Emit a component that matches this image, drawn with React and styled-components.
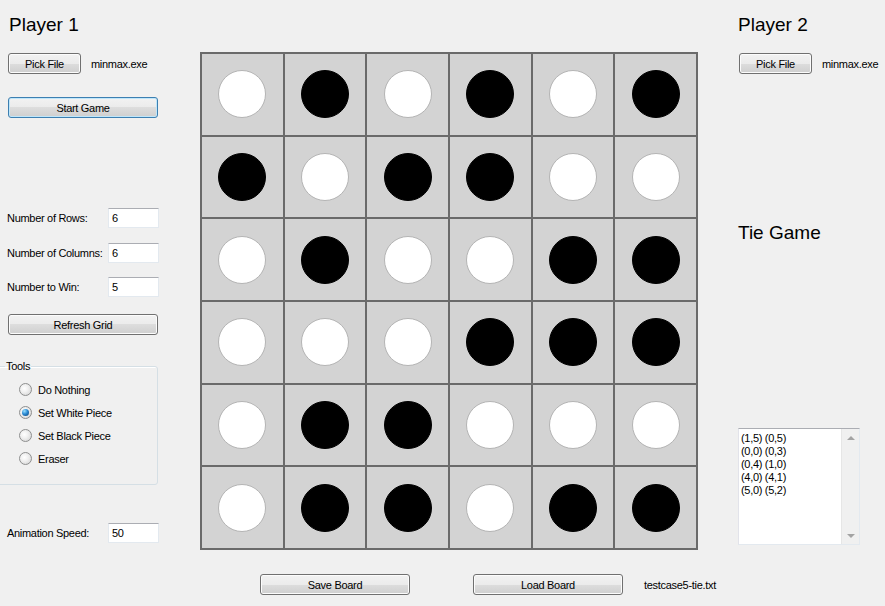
import React from "react";
import styled, { createGlobalStyle } from "styled-components";

const GlobalStyle = createGlobalStyle`
  html, body {
    margin: 0;
    padding: 0;
    background: #f0f0f0;
  }
  body {
    font-family: "Liberation Sans", Arial, sans-serif;
    font-size: 11px;
    letter-spacing: -0.3px;
    color: #000;
  }
`;

// board contents, W = white, B = black
const BOARD = [
  "WBWBWB",
  "BWBBWW",
  "WBWWBB",
  "WWWBBB",
  "WBBWWW",
  "WBBWBB",
];

const MOVES = ["(1,5) (0,5)", "(0,0) (0,3)", "(0,4) (1,0)", "(4,0) (4,1)", "(5,0) (5,2)"];

const Window = styled.div`
  width: 885px;
  height: 606px;
  display: flex;
  overflow: hidden;
  background: #f0f0f0;
`;

const SidePanel = styled.div`
  width: ${(p) => p.$width}px;
  flex-shrink: 0;
  display: flex;
  flex-direction: column;
  padding-left: ${(p) => p.$pad || 0}px;
  box-sizing: border-box;
`;

const CenterColumn = styled.div`
  width: 498px;
  flex-shrink: 0;
  display: flex;
  flex-direction: column;
  padding-top: 52px;
  margin-right: 40px;
`;

const Title = styled.div`
  font-size: 19px;
  line-height: 22px;
  letter-spacing: 0;
  margin-top: 14px;
  margin-left: ${(p) => p.$indent || 0}px;
  white-space: nowrap;
`;

const Result = styled(Title)`
  margin-top: 148px;
`;

const Row = styled.div`
  display: flex;
  align-items: center;
  margin-top: ${(p) => p.$top || 0}px;
  margin-left: ${(p) => p.$indent || 0}px;
`;

const Button = styled.button`
  width: ${(p) => p.$width || 150}px;
  height: 21px;
  flex-shrink: 0;
  padding: 0;
  font-family: "Liberation Sans", Arial, sans-serif;
  font-size: 11px;
  letter-spacing: -0.3px;
  color: #000;
  border: 1px solid ${(p) => (p.$focused ? "#3c7fb1" : "#707070")};
  border-radius: 3px;
  background: linear-gradient(#f2f2f2 0%, #ebebeb 50%, #dddddd 50%, #cfcfcf 100%);
  box-shadow: inset 0 0 0 1px ${(p) => (p.$focused ? "#bfe6fa" : "#fcfcfc")};
  cursor: pointer;
`;

const FileName = styled.span`
  margin-left: 10px;
  white-space: nowrap;
`;

const FieldLabel = styled.span`
  width: 101px;
  white-space: nowrap;
`;

const TextBox = styled.div`
  width: 51px;
  height: 20px;
  box-sizing: border-box;
  background: #fff;
  border: 1px solid #e3e9ef;
  border-top-color: #abadb3;
  display: flex;
  align-items: center;
  padding-left: 3px;
`;

const GroupBox = styled.fieldset`
  margin: 25px 0 0 -10px;
  width: 161px;
  box-sizing: border-box;
  padding: 5px 0 14px 0;
  border: 1px solid #d5dfe5;
  border-radius: 3px;
  box-shadow: inset 1px 1px 0 #fff;
`;

const Legend = styled.legend`
  padding: 0 1px;
  margin-left: 7px;
  line-height: 13px;
`;

const RadioList = styled.div`
  padding-left: 21px;
`;

const RadioRow = styled.label`
  display: flex;
  align-items: center;
  height: 23px;
  gap: 6px;
`;

const RadioDot = styled.span`
  width: 13px;
  height: 13px;
  box-sizing: border-box;
  border-radius: 50%;
  border: 1px solid #8e8f8f;
  background: radial-gradient(circle at 40% 40%, #ffffff 0%, #f0f0f0 40%, #cfcfcf 100%);
  display: flex;
  align-items: center;
  justify-content: center;

  &::after {
    content: "";
    display: ${(p) => (p.$checked ? "block" : "none")};
    width: 7px;
    height: 7px;
    border-radius: 50%;
    background: radial-gradient(circle at 35% 30%, #9be1ff 0%, #2a8ad4 45%, #0d3d6e 100%);
  }
`;

const Board = styled.div`
  width: 498px;
  height: 498px;
  box-sizing: border-box;
  padding: 2px;
  display: grid;
  grid-template-columns: repeat(6, 1fr);
  grid-template-rows: repeat(6, 1fr);
  gap: 2px;
  background: #6a6a6a;
`;

const Cell = styled.div`
  background: #d3d3d3;
  display: flex;
  align-items: center;
  justify-content: center;
`;

const Piece = styled.div`
  width: 48px;
  height: 48px;
  box-sizing: border-box;
  border-radius: 50%;
  background: ${(p) => (p.$black ? "#000" : "#fff")};
  border: 1px solid ${(p) => (p.$black ? "#000" : "#b4b4b4")};
`;

const BottomBar = styled.div`
  display: flex;
  align-items: center;
  margin-top: 24px;
  padding-left: 60px;
  gap: 63px;
  white-space: nowrap;
`;

const LoadGroup = styled.div`
  display: flex;
  align-items: center;
  gap: 21px;
`;

const ListBox = styled.div`
  margin-top: 184px;
  width: 122px;
  height: 117px;
  box-sizing: border-box;
  border: 1px solid #a0a0a0;
  border-color: #abadb3 #e3e9ef #e3e9ef #e2e3ea;
  background: #fff;
  display: flex;
`;

const ListItems = styled.div`
  flex: 1;
  padding: 3px 0 0 2px;
  line-height: 13px;
`;

const ScrollBar = styled.div`
  width: 17px;
  background: #f0f0f0;
  border-left: 1px solid #e6e6e6;
  display: flex;
  flex-direction: column;
  justify-content: space-between;
  align-items: center;
  padding: 7px 0 6px;
`;

const Arrow = styled.span`
  width: 0;
  height: 0;
  border-left: 4px solid transparent;
  border-right: 4px solid transparent;
  ${(p) => (p.$down ? "border-top: 4px solid #a3a3a3;" : "border-bottom: 4px solid #a3a3a3;")}
`;

function Radio({ label, checked }) {
  return (
    <RadioRow>
      <RadioDot $checked={checked} />
      {label}
    </RadioRow>
  );
}

function Field({ label, value, top }) {
  return (
    <Row $top={top}>
      <FieldLabel>{label}</FieldLabel>
      <TextBox>{value}</TextBox>
    </Row>
  );
}

export default function App() {
  return (
    <>
      <GlobalStyle />
      <Window>
        <SidePanel $width={200} $pad={7}>
          <Title $indent={2}>Player 1</Title>
          <Row $top={17} $indent={1}>
            <Button $width={73}>Pick File</Button>
            <FileName>minmax.exe</FileName>
          </Row>
          <Row $top={23} $indent={1}>
            <Button $focused>Start Game</Button>
          </Row>
          <Field label="Number of Rows:" value="6" top={90} />
          <Field label="Number of Columns:" value="6" top={15} />
          <Field label="Number to Win:" value="5" top={14} />
          <Row $top={17} $indent={1}>
            <Button>Refresh Grid</Button>
          </Row>
          <GroupBox>
            <Legend>Tools</Legend>
            <RadioList>
              <Radio label="Do Nothing" />
              <Radio label="Set White Piece" checked />
              <Radio label="Set Black Piece" />
              <Radio label="Eraser" />
            </RadioList>
          </GroupBox>
          <Field label="Animation Speed:" value="50" top={38} />
        </SidePanel>

        <CenterColumn>
          <Board>
            {BOARD.map((row, r) =>
              row.split("").map((c, i) => (
                <Cell key={r + "-" + i}>
                  <Piece $black={c === "B"} />
                </Cell>
              ))
            )}
          </Board>
          <BottomBar>
            <Button>Save Board</Button>
            <LoadGroup>
              <Button>Load Board</Button>
              <span>testcase5-tie.txt</span>
            </LoadGroup>
          </BottomBar>
        </CenterColumn>

        <SidePanel $width={147}>
          <Title>Player 2</Title>
          <Row $top={17} $indent={1}>
            <Button $width={73}>Pick File</Button>
            <FileName>minmax.exe</FileName>
          </Row>
          <Result>Tie Game</Result>
          <ListBox>
            <ListItems>
              {MOVES.map((m) => (
                <div key={m}>{m}</div>
              ))}
            </ListItems>
            <ScrollBar>
              <Arrow />
              <Arrow $down />
            </ScrollBar>
          </ListBox>
        </SidePanel>
      </Window>
    </>
  );
}
